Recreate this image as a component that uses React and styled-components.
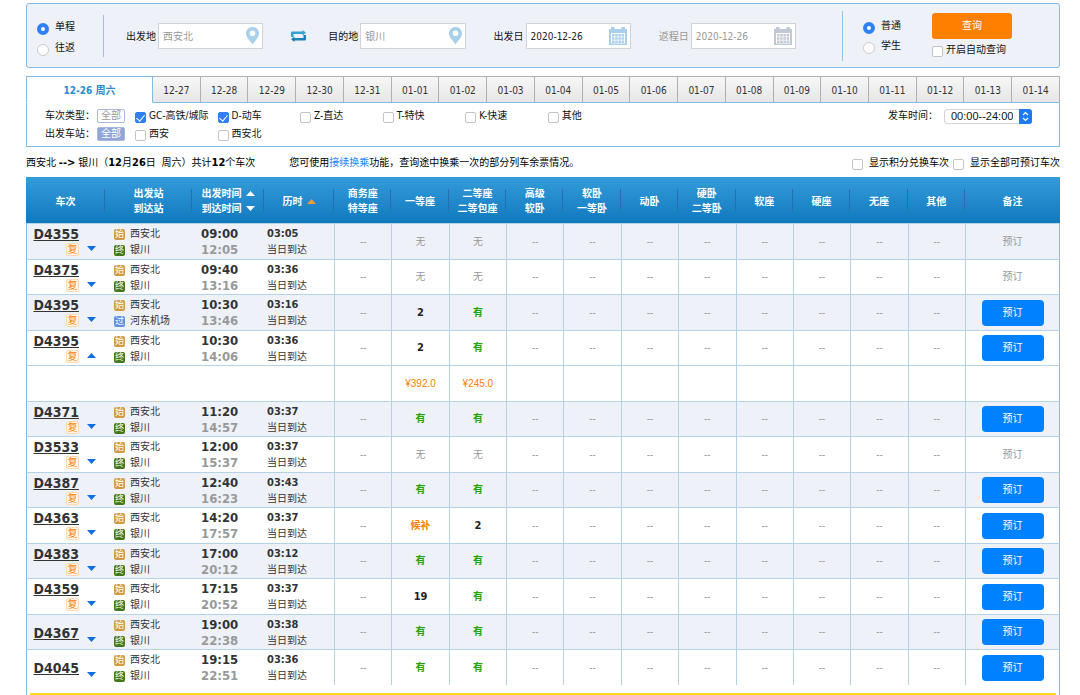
import React, { useState } from 'react'
import styled, { createGlobalStyle, css } from 'styled-components'

const GlobalStyle = createGlobalStyle`
  * {
    box-sizing: border-box;
  }

  body {
    margin: 0;
    background: #fff;
    color: #111;
    font: 10px/16px 'DejaVu Sans Condensed', 'Noto Sans CJK SC', sans-serif;
  }

  button, input, select {
    font: inherit;
    color: inherit;
  }
`

const Page = styled.main`
  padding: 3px 20px 0 26px;
`

const SearchPanel = styled.form`
  display: flex;
  align-items: center;
  height: 65px;
  border: 1px solid #7fbde6;
  border-radius: 3px;
  background: #eef1f8;
`

const RadioGroup = styled.div`
  display: flex;
  flex-direction: column;
  gap: ${p => p.$gap};
  padding: ${p => p.$padding};
`

const Divider = styled.div`
  width: 1px;
  height: ${p => p.$height};
  background: #8ec6ea;
`

const Choice = styled.label`
  display: flex;
  align-items: center;
  gap: ${p => p.$gap || '3px'};
  white-space: nowrap;
`

const RadioInput = styled.input`
  appearance: none;
  width: 12px;
  height: 12px;
  margin: 4px 0 0;
  border: 1px solid #c9c9c9;
  border-radius: 50%;
  background: #fff;

  &:checked {
    border: 4px solid #2f80f8;
  }
`

const CheckInput = styled.input`
  appearance: none;
  flex: none;
  display: flex;
  justify-content: center;
  width: 11px;
  height: 11px;
  margin: 3px 0 0;
  border: 1px solid #c4c4c4;
  border-radius: 2px;
  background: #fff;

  &:checked {
    border-color: #2f80f8;
    background: #2f80f8;
  }

  &:checked::after {
    content: '';
    width: 4px;
    height: 7px;
    border: solid #fff;
    border-width: 0 1px 1px 0;
    transform: rotate(40deg);
  }
`

const Fields = styled.div`
  flex: 1;
  display: flex;
  align-items: center;
  min-width: 0;
  padding: 0 46px 0 22px;
`

const FieldWrap = styled.div`
  flex: 1;
  display: flex;
  align-items: center;
  gap: 2px;
  min-width: 0;
  color: ${p => (p.$muted ? '#999' : '#111')};

  label {
    padding-top: 2px;
    white-space: nowrap;
  }

  & + & {
    margin-left: 28px;
  }
`

const InputBox = styled.div`
  flex: 1;
  display: flex;
  align-items: center;
  min-width: 0;
  height: 26px;
  padding: 0 3px 0 4px;
  border: 1px solid #d2d3d6;
  background: #fff;

  svg {
    flex: none;
  }
`

const TextInput = styled.input`
  flex: 1;
  min-width: 0;
  padding: 2px 0 0;
  border: 0;
  outline: none;
  background: none;
  color: ${p => (p.$muted ? '#999' : '#222')};
`

const SwapButton = styled.button`
  flex: none;
  display: flex;
  width: 16px;
  margin: 0 21px 0 28px;
  padding: 0;
  border: 0;
  background: none;
  cursor: pointer;
`

const QueryBox = styled.div`
  display: flex;
  flex-direction: column;
  gap: 3px;
  padding: 0 47px 0 31px;
`

const QueryButton = styled.button`
  width: 80px;
  height: 26px;
  border: 0;
  border-radius: 3px;
  background: #ff8000;
  color: #fff;
  cursor: pointer;
`

const Tabs = styled.nav`
  display: flex;
  height: 27px;
  margin-top: 8px;
`

const Tab = styled.button`
  flex: 1;
  min-width: 0;
  padding: 2px 0 0;
  border: solid #b0b0b0;
  border-width: 1px 1px 0 0;
  border-bottom: 1px solid #7fbde6;
  background: linear-gradient(#f7f7f7, #e6e6e6);
  color: #333;
  cursor: pointer;

  ${p => p.$active && css`
    flex: none;
    width: 127px;
    border: 1px solid #7fbde6;
    border-bottom-color: #fff;
    background: #fff;
    color: #2a8bcd;
    font-weight: bold;
  `}
`

const Filters = styled.section`
  padding: 4px 0 3px;
  border: 1px solid #7fbde6;
  border-top: 0;
`

const FilterRow = styled.div`
  display: flex;
  align-items: center;
  height: 18px;
`

const FilterTitle = styled.span`
  width: 52px;
  margin-left: 18px;
  white-space: nowrap;
`

const AllButton = styled.button`
  width: 28px;
  height: 14px;
  margin-right: 10px;
  padding: 0;
  border: 1px solid #a8b9dd;
  border-radius: 2px;
  background: ${p => (p.$active ? '#8fa6d6' : '#fff')};
  color: ${p => (p.$active ? '#fff' : '#999')};
  line-height: 12px;
`

const FilterItem = styled.div`
  width: 8%;
`

const TimeFilter = styled.div`
  display: flex;
  align-items: center;
  gap: 6px;
  margin: 0 27px 0 auto;
`

const SelectBox = styled.div`
  position: relative;
  display: flex;

  select {
    appearance: none;
    width: 88px;
    height: 15px;
    padding: 0 18px 0 6px;
    border: 1px solid #d5d5d5;
    border-radius: 3px;
    background: #fff;
    font: 11px/13px 'Liberation Sans', sans-serif;
  }

  svg {
    position: absolute;
    top: 0;
    right: 0;
    pointer-events: none;
  }
`

const Summary = styled.div`
  display: flex;
  align-items: center;
  height: 30px;
  padding-top: 2px;
  color: #000;
  white-space: nowrap;

  p {
    margin: 0 34px 0 0;
  }

  b {
    font-size: 11px;
  }

  a {
    color: #1c86ff;
    text-decoration: none;
  }
`

const SummaryChecks = styled.div`
  display: flex;
  gap: 4px;
  margin-left: auto;
`

const Table = styled.table`
  width: 100%;
  table-layout: fixed;
  border-collapse: separate;
  border-spacing: 0;
  color: #333;
`

const HeadCell = styled.th`
  height: 46px;
  padding: 2px 0 0;
  background: linear-gradient(#2a6cb0, #2a6cb0) no-repeat right center / 1px 22px;
  color: #fff;
  line-height: 15px;

  &:last-child {
    background: none;
  }
`

const HeadRow = styled.tr`
  background: linear-gradient(#359cda, #1079be);
`

const HeadLine = styled.div`
  display: flex;
  align-items: center;
  justify-content: center;
  gap: 4px;
`

const Body = styled.tbody`
  border: 0;
`

const Cell = styled.td`
  padding: 0;
  border-top: 1px solid #b4d3e6;
  vertical-align: middle;
  text-align: center;

  &:first-child {
    border-left: 1px solid #7fbde6;
  }

  &:last-child {
    border-right: 1px solid #7fbde6;
  }
`

const InfoCell = styled(Cell)`
  padding: 2px 0 0 ${p => p.$indent || '9px'};
  text-align: left;
  vertical-align: top;
`

const SeatCell = styled(Cell)`
  border-left: 1px solid #b4d3e6;
  color: ${p => p.$color || '#999'};
  font-size: ${p => (p.$count ? '11px' : '10px')};
  font-weight: ${p => (p.$bold ? 'bold' : 'normal')};
`

const PriceCell = styled(SeatCell)`
  color: #ff8000;
  font-family: 'Liberation Sans', sans-serif;
`

const Row = styled.tr`
  height: 36px;
  background: ${p => (p.$shaded ? '#eef1f8' : '#fff')};

  &:nth-child(even) {
    height: 35px;
  }
`

const TrainBox = styled.div`
  display: flex;
  height: 32px;
`

const TrainNumber = styled.div`
  display: flex;
  flex-direction: column;
  align-items: flex-end;
  justify-content: ${p => (p.$plain ? 'center' : 'flex-start')};
  gap: 1px;
  width: 46px;

  a {
    color: #333;
    font-size: 14px;
    font-weight: bold;
    line-height: 16px;
    text-decoration-thickness: 1px;
    text-underline-offset: 1px;
  }
`

const FuBadge = styled.span`
  width: 13px;
  height: 13px;
  border: 1px solid #ffd9b0;
  border-radius: 2px;
  background: #fff6ec;
  color: #ff8000;
  line-height: 11px;
  text-align: center;
`

const ToggleButton = styled.button`
  align-self: flex-end;
  display: flex;
  margin: 0 0 7px 8px;
  padding: 0;
  border: 0;
  background: none;
  cursor: pointer;
`

const Station = styled.div`
  display: flex;
  align-items: center;
  gap: 5px;
  height: 16px;
`

const badgeColors = {
  始: '#d19a45',
  终: '#44791b',
  过: '#5f93dd',
}

const StationBadge = styled.span`
  width: 11px;
  height: 11px;
  border-radius: 2px;
  background: ${p => badgeColors[p.$kind]};
  color: #fff;
  font-size: 9px;
  line-height: 11px;
  text-align: center;
`

const Time = styled.div`
  height: 16px;
  color: ${p => (p.$arrive ? '#999' : '#333')};
  font-size: 13px;
  font-weight: bold;
`

const Duration = styled.div`
  font-size: 11px;
  font-weight: bold;
`

const BookButton = styled.button`
  width: 62px;
  height: 26px;
  border: 0;
  border-radius: 4px;
  background: #0081ff;
  color: #fff;
  vertical-align: middle;
  cursor: pointer;
`

const TableFooter = styled.div`
  height: 10px;
  padding: 8px 3px 0;
  border: solid #7fbde6;
  border-width: 0 1px;

  hr {
    margin: 0;
    border: 0;
    border-top: 2px solid #ffdc1e;
  }
`

const PinIcon = () => (
  <svg width="13" height="18" viewBox="0 0 13 18" fill="#a9cfeb" aria-hidden="true">
    <path fillRule="evenodd" d="M6.500 0A6.400 6.400 0 0 0 0 6.500C0 10.500 4 13.500 6.500 17.500C9 13.500 13 10.500 13 6.500A6.400 6.400 0 0 0 6.500 0ZM6.500 3.500A2.800 2.800 0 1 1 6.500 9.100A2.800 2.800 0 0 1 6.500 3.500Z" />
  </svg>
)

const CalendarIcon = ({ color }) => (
  <svg width="18" height="18" viewBox="0 0 18 18" aria-hidden="true">
    <path fill={color} d="M0 2H2V0H5.500V2H12.500V0H16V2H18V18H0Z" />
    <path fill="#fff" d="M2 6H16V16.500H2Z" />
    <path
      fill={color}
      d="M3 7h2.500v2.500H3ZM6.200 7h2.500v2.500H6.200ZM9.400 7h2.500v2.500H9.400ZM12.600 7h2.500v2.500h-2.500ZM3 10.200h2.500v2.500H3ZM6.200 10.200h2.500v2.500H6.200ZM9.400 10.200h2.500v2.500H9.400ZM12.600 10.200h2.500v2.500h-2.500ZM3 13.400h2.500v2.500H3ZM6.200 13.400h2.500v2.500H6.200ZM9.400 13.400h2.500v2.500H9.400ZM12.600 13.400h2.500v2.500h-2.500Z"
    />
  </svg>
)

const SwapIcon = () => (
  <svg width="15" height="12" viewBox="0 0 15 12" aria-hidden="true">
    <path fill="#2fa3d3" d="M0 7V2.500Q0 1.500 1 1.500H11.500V0L15 2.800L11.500 5.500V4H2.500V7Z" />
    <path fill="#1b83b8" d="M15 5V9.500Q15 10.500 14 10.500H3.500V12L0 9.200L3.500 6.500V8H12.500V5Z" />
  </svg>
)

const Triangle = ({ up, color = '#fff' }) => (
  <svg width="9" height="5" viewBox="0 0 9 5" fill={color} aria-hidden="true">
    <path d={up ? 'M0 5L4.500 0L9 5Z' : 'M0 0L4.500 5L9 0Z'} />
  </svg>
)

const Stepper = () => (
  <svg width="13" height="15" viewBox="0 0 13 15" fill="none" aria-hidden="true">
    <path fill="#1a7af8" d="M0 0H10A3 3 0 0 1 13 3V12A3 3 0 0 1 10 15H0Z" />
    <path stroke="#fff" strokeWidth="1.200" d="M4 6L6.500 3.500L9 6M4 9L6.500 11.500L9 9" />
  </svg>
)

const dates = [
  '12-27', '12-28', '12-29', '12-30', '12-31', '01-01', '01-02', '01-03', '01-04', '01-05',
  '01-06', '01-07', '01-08', '01-09', '01-10', '01-11', '01-12', '01-13', '01-14',
]

const trainTypes = ['GC-高铁/城际', 'D-动车', 'Z-直达', 'T-特快', 'K-快速', '其他']

const seatHeads = [
  ['商务座', '特等座'], ['一等座'], ['二等座', '二等包座'], ['高级', '软卧'], ['软卧', '一等卧'],
  ['动卧'], ['硬卧', '二等卧'], ['软座'], ['硬座'], ['无座'], ['其他'],
]

const end = ['终', '银川']

const trains = [
  { no: 'D4355', to: end, leave: '09:00', arrive: '12:05', lasts: '03:05', first: '无', second: '无' },
  { no: 'D4375', to: end, leave: '09:40', arrive: '13:16', lasts: '03:36', first: '无', second: '无' },
  { no: 'D4395', to: ['过', '河东机场'], leave: '10:30', arrive: '13:46', lasts: '03:16', first: '2', second: '有' },
  { no: 'D4395', to: end, leave: '10:30', arrive: '14:06', lasts: '03:36', first: '2', second: '有', prices: ['¥392.0', '¥245.0'] },
  { no: 'D4371', to: end, leave: '11:20', arrive: '14:57', lasts: '03:37', first: '有', second: '有' },
  { no: 'D3533', to: end, leave: '12:00', arrive: '15:37', lasts: '03:37', first: '无', second: '无' },
  { no: 'D4387', to: end, leave: '12:40', arrive: '16:23', lasts: '03:43', first: '有', second: '有' },
  { no: 'D4363', to: end, leave: '14:20', arrive: '17:57', lasts: '03:37', first: '候补', second: '2' },
  { no: 'D4383', to: end, leave: '17:00', arrive: '20:12', lasts: '03:12', first: '有', second: '有' },
  { no: 'D4359', to: end, leave: '17:15', arrive: '20:52', lasts: '03:37', first: '19', second: '有' },
  { no: 'D4367', to: end, leave: '19:00', arrive: '22:38', lasts: '03:38', first: '有', second: '有', plain: true },
  { no: 'D4045', to: end, leave: '19:15', arrive: '22:51', lasts: '03:36', first: '有', second: '有', plain: true },
]

const seatColors = { 无: '#999', '--': '#999', 有: '#26a306', 候补: '#ff8000' }

const Field = ({ id, label, value, icon, muted, mutedLabel }) => (
  <FieldWrap $muted={mutedLabel}>
    <label htmlFor={id}>{label}</label>
    <InputBox>
      <TextInput id={id} defaultValue={value} $muted={muted} />
      {icon}
    </InputBox>
  </FieldWrap>
)

const Radio = ({ name, label, checked }) => (
  <Choice $gap="6px">
    <RadioInput type="radio" name={name} defaultChecked={checked} />
    {label}
  </Choice>
)

const Checkbox = ({ label, checked, gap }) => (
  <Choice $gap={gap}>
    <CheckInput type="checkbox" defaultChecked={checked} />
    {label}
  </Choice>
)

const Seat = ({ value }) => (
  <SeatCell
    $color={seatColors[value] || '#222'}
    $bold={value !== '无' && value !== '--'}
    $count={!seatColors[value]}
  >
    {value}
  </SeatCell>
)

const TrainRows = ({ train, shaded, open, onToggle }) => {
  const soldOut = train.first === '无' && train.second === '无'

  return (
    <>
      <Row $shaded={shaded}>
        <InfoCell $indent="6px">
          <TrainBox>
            <TrainNumber $plain={train.plain}>
              <a href="#train">{train.no}</a>
              {!train.plain && <FuBadge>复</FuBadge>}
            </TrainNumber>
            <ToggleButton aria-label="票价" onClick={onToggle}>
              <Triangle up={open} color="#0f6fe0" />
            </ToggleButton>
          </TrainBox>
        </InfoCell>
        <InfoCell>
          <Station><StationBadge $kind="始">始</StationBadge>西安北</Station>
          <Station><StationBadge $kind={train.to[0]}>{train.to[0]}</StationBadge>{train.to[1]}</Station>
        </InfoCell>
        <InfoCell>
          <Time>{train.leave}</Time>
          <Time $arrive>{train.arrive}</Time>
        </InfoCell>
        <InfoCell $indent="3px">
          <Duration>{train.lasts}</Duration>
          <div>当日到达</div>
        </InfoCell>
        <Seat value="--" />
        <Seat value={train.first} />
        <Seat value={train.second} />
        {seatHeads.slice(3).map((head, i) => <Seat key={i} value="--" />)}
        <SeatCell>{soldOut ? '预订' : <BookButton>预订</BookButton>}</SeatCell>
      </Row>
      {open && (
        <Row>
          <Cell colSpan={4} />
          <PriceCell />
          <PriceCell>{train.prices?.[0]}</PriceCell>
          <PriceCell>{train.prices?.[1]}</PriceCell>
          {seatHeads.slice(3).map((head, i) => <PriceCell key={i} />)}
          <PriceCell />
        </Row>
      )}
    </>
  )
}

const App = () => {
  const [openRow, setOpenRow] = useState(3)

  return (
    <>
      <GlobalStyle />
      <Page>
        <SearchPanel onSubmit={e => e.preventDefault()}>
          <RadioGroup $gap="5px" $padding="4px 28px 0 10px">
            <Radio name="trip" label="单程" checked />
            <Radio name="trip" label="往返" />
          </RadioGroup>
          <Divider $height="42px" />
          <Fields>
            <Field id="from" label="出发地" value="西安北" icon={<PinIcon />} muted />
            <SwapButton type="button" aria-label="换"><SwapIcon /></SwapButton>
            <Field id="to" label="目的地" value="银川" icon={<PinIcon />} muted />
            <Field id="leave" label="出发日" value="2020-12-26" icon={<CalendarIcon color="#a9cfeb" />} />
            <Field id="back" label="返程日" value="2020-12-26" icon={<CalendarIcon color="#c3c9d4" />} muted mutedLabel />
          </Fields>
          <Divider $height="50px" />
          <RadioGroup $gap="4px" $padding="0 0 0 20px">
            <Radio name="passenger" label="普通" checked />
            <Radio name="passenger" label="学生" />
          </RadioGroup>
          <QueryBox>
            <QueryButton>查询</QueryButton>
            <Checkbox label="开启自动查询" />
          </QueryBox>
        </SearchPanel>

        <Tabs>
          <Tab $active>12-26 周六</Tab>
          {dates.map(date => <Tab key={date}>{date}</Tab>)}
        </Tabs>
        <Filters>
          <FilterRow>
            <FilterTitle>车次类型：</FilterTitle>
            <AllButton>全部</AllButton>
            {trainTypes.map((type, i) => (
              <FilterItem key={type}><Checkbox label={type} checked={i < 2} /></FilterItem>
            ))}
            <TimeFilter>
              <label htmlFor="time">发车时间：</label>
              <SelectBox>
                <select id="time"><option>00:00--24:00</option></select>
                <Stepper />
              </SelectBox>
            </TimeFilter>
          </FilterRow>
          <FilterRow>
            <FilterTitle>出发车站：</FilterTitle>
            <AllButton $active>全部</AllButton>
            <FilterItem><Checkbox label="西安" /></FilterItem>
            <FilterItem><Checkbox label="西安北" /></FilterItem>
          </FilterRow>
        </Filters>

        <Summary>
          <p>
            西安北 <b>--&gt;</b> 银川（<b>12</b>月<b>26</b>日&nbsp; 周六）共计<b>12</b>个车次
          </p>
          <p>您可使用<a href="#transfer">接续换乘</a>功能，查询途中换乘一次的部分列车余票情况。</p>
          <SummaryChecks>
            <Checkbox gap="6px" label="显示积分兑换车次" />
            <Checkbox gap="6px" label="显示全部可预订车次" />
          </SummaryChecks>
        </Summary>

        <Table>
          <colgroup>
            <col width="79" />
            <col width="87" />
            <col width="72" />
            <col width="70" />
            {seatHeads.map((head, i) => <col key={i} />)}
            <col width="95" />
          </colgroup>
          <thead>
            <HeadRow>
              <HeadCell>车次</HeadCell>
              <HeadCell>出发站<br />到达站</HeadCell>
              <HeadCell>
                <HeadLine>出发时间<Triangle up /></HeadLine>
                <HeadLine>到达时间<Triangle /></HeadLine>
              </HeadCell>
              <HeadCell><HeadLine>历时<Triangle up color="#f39a35" /></HeadLine></HeadCell>
              {seatHeads.map((head, i) => (
                <HeadCell key={i}>{head[0]}{head[1] && <><br />{head[1]}</>}</HeadCell>
              ))}
              <HeadCell>备注</HeadCell>
            </HeadRow>
          </thead>
          <Body>
            {trains.map((train, i) => (
              <TrainRows
                key={i}
                train={train}
                shaded={i % 2 === 0}
                open={openRow === i}
                onToggle={() => setOpenRow(openRow === i ? null : i)}
              />
            ))}
          </Body>
        </Table>
        <TableFooter><hr /></TableFooter>
      </Page>
    </>
  )
}

export default App
